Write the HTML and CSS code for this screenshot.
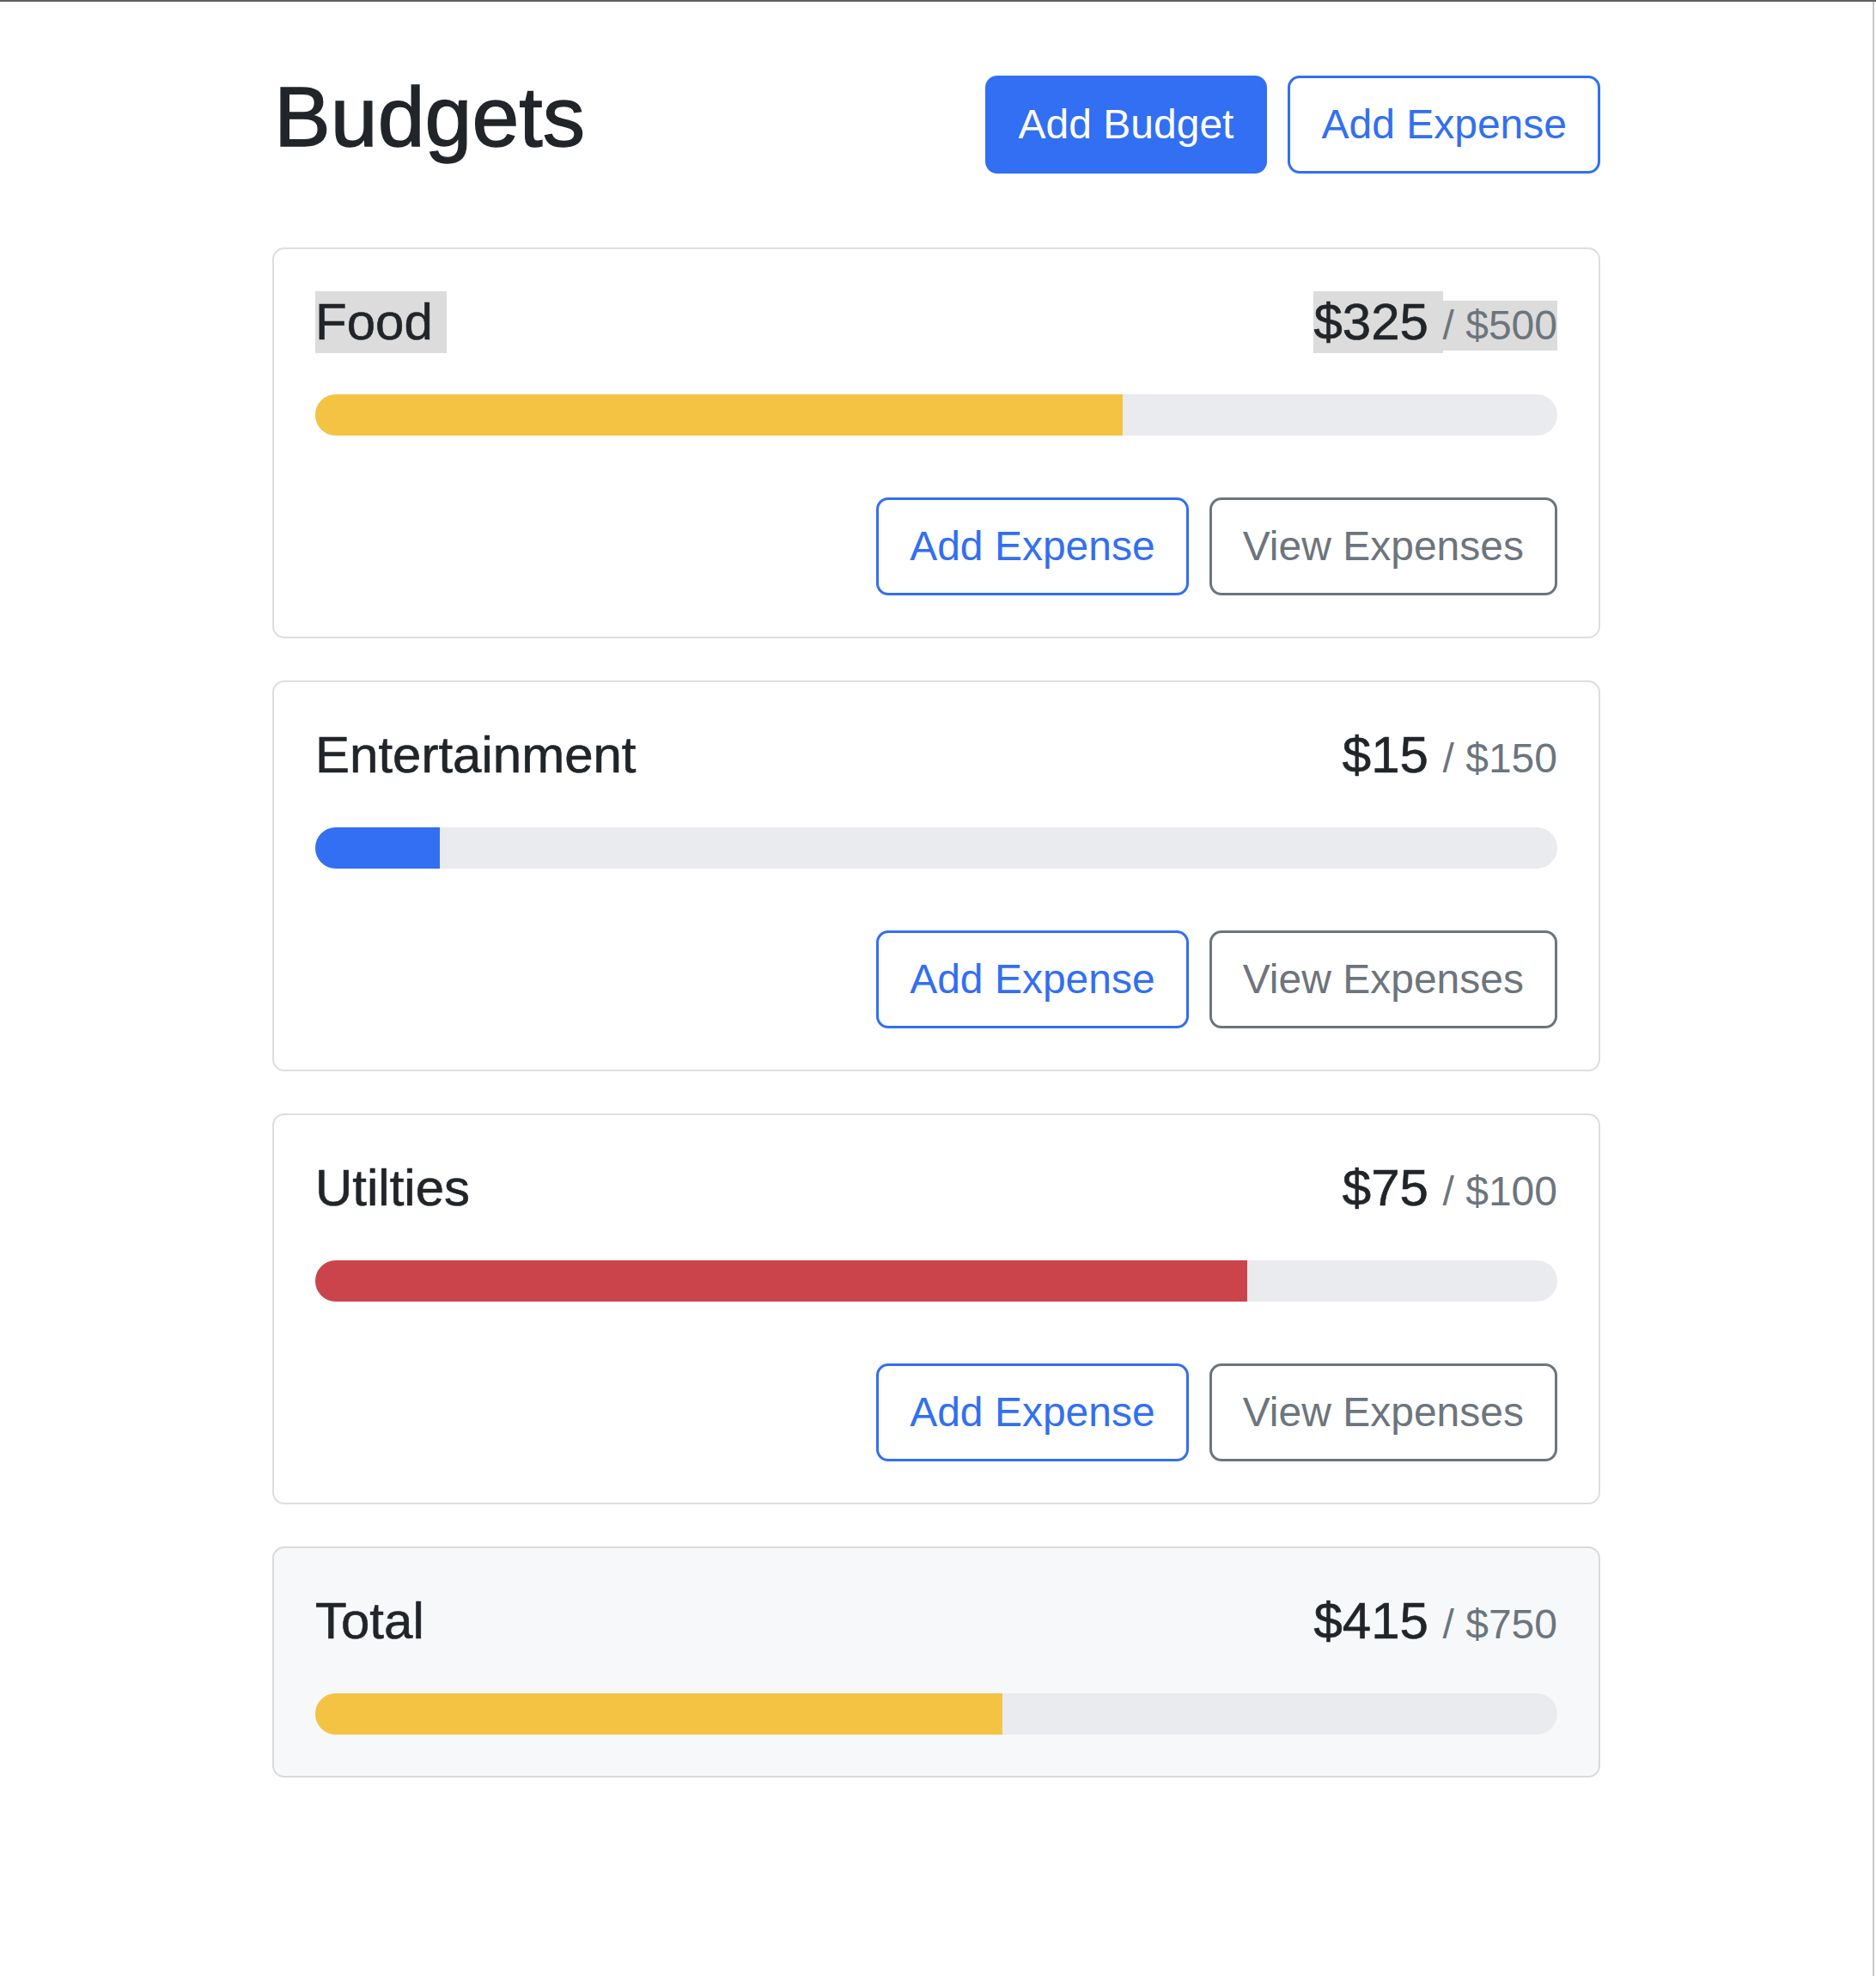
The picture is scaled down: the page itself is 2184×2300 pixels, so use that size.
FILE: index.html
```html
<!DOCTYPE html>
<html lang="en">
<head>
<meta charset="utf-8">
<title>Budgets</title>
<link rel="stylesheet" href="styles.css">
</head>
<body>
<div class="window">
  <div class="viewport">
    <div class="container">
      <header class="page-header">
        <h1 class="page-title">Budgets</h1>
        <div class="header-actions">
          <button class="btn btn-primary">Add Budget</button>
          <button class="btn btn-outline-primary">Add Expense</button>
        </div>
      </header>

      <section class="card">
        <div class="card-head">
          <span class="card-title hl">Food </span>
          <span class="amount"><span class="spent hl">$325 </span><span class="max hl">/ $500</span></span>
        </div>
        <div class="progress"><div class="progress-bar bar-warning" style="width: 65%"></div></div>
        <div class="card-actions">
          <button class="btn btn-outline-primary">Add Expense</button>
          <button class="btn btn-outline-secondary">View Expenses</button>
        </div>
      </section>

      <section class="card">
        <div class="card-head">
          <span class="card-title">Entertainment</span>
          <span class="amount"><span class="spent">$15 </span><span class="max">/ $150</span></span>
        </div>
        <div class="progress"><div class="progress-bar bar-primary" style="width: 10%"></div></div>
        <div class="card-actions">
          <button class="btn btn-outline-primary">Add Expense</button>
          <button class="btn btn-outline-secondary">View Expenses</button>
        </div>
      </section>

      <section class="card">
        <div class="card-head">
          <span class="card-title">Utilties</span>
          <span class="amount"><span class="spent">$75 </span><span class="max">/ $100</span></span>
        </div>
        <div class="progress"><div class="progress-bar bar-danger" style="width: 75%"></div></div>
        <div class="card-actions">
          <button class="btn btn-outline-primary">Add Expense</button>
          <button class="btn btn-outline-secondary">View Expenses</button>
        </div>
      </section>

      <section class="card card-total">
        <div class="card-head">
          <span class="card-title">Total</span>
          <span class="amount"><span class="spent">$415 </span><span class="max">/ $750</span></span>
        </div>
        <div class="progress"><div class="progress-bar bar-warning" style="width: 55.33%"></div></div>
      </section>
    </div>
  </div>
</div>
</body>
</html>
```

FILE: styles.css
```css
* {
  box-sizing: border-box;
}

html, body {
  margin: 0;
  padding: 0;
  background: #ffffff;
}

body {
  font-family: "Liberation Sans", Arial, Helvetica, sans-serif;
  color: #212529;
}

.window {
  display: flex;
  border-top: 2px solid #5f5e63;
  min-height: 2300px;
}

.viewport {
  width: 2182px;
  border-right: 2px solid #c9c9cc;
  min-height: 2298px;
}

.container {
  width: 1546px;
  margin: 0 auto;
  padding-top: 75px;
}

.page-header {
  display: flex;
  justify-content: space-between;
  align-items: flex-start;
  margin-bottom: 86px;
}

.page-title {
  margin: 0;
  margin-left: 2px;
  font-size: 98.7px;
  line-height: 118px;
  font-weight: 500;
  color: #212529;
  -webkit-text-stroke: 1.4px #212529;
}

.header-actions {
  display: flex;
  gap: 24px;
  margin-top: 11px;
}

.btn {
  font-family: inherit;
  font-size: 48px;
  line-height: 72px;
  padding: 18px 36px;
  border: 3px solid transparent;
  border-radius: 14px;
  background: #ffffff;
  cursor: pointer;
  white-space: nowrap;
}

.btn-primary {
  background: #326ff2;
  border-color: #326ff2;
  color: #ffffff;
}

.btn-outline-primary {
  border-color: #326ff2;
  color: #326ff2;
}

.btn-outline-secondary {
  border-color: #6c757d;
  color: #6c757d;
}

.card {
  border: 2px solid #dedede;
  border-radius: 14px;
  padding: 49px 48px 48px 48px;
  margin-bottom: 49px;
  background: #ffffff;
}

.card-total {
  background: #f7f8fa;
  border-color: #d9dadc;
}

.card-head {
  display: flex;
  justify-content: space-between;
  align-items: baseline;
}

.card-title {
  display: inline-block;
  font-size: 60px;
  line-height: 72px;
  font-weight: 500;
  white-space: pre;
  -webkit-text-stroke: 0.6px #212529;
}

.amount {
  display: inline-flex;
  align-items: baseline;
}

.spent {
  display: inline-block;
  font-size: 60px;
  line-height: 72px;
  font-weight: 500;
  white-space: pre;
  -webkit-text-stroke: 0.6px #212529;
}

.max {
  display: inline-block;
  font-size: 48px;
  line-height: 58px;
  color: #6c757d;
  white-space: pre;
}

.hl {
  background: #dcdcdc;
}

.progress {
  margin-top: 48px;
  height: 48px;
  border-radius: 24px;
  background: #eaebee;
  overflow: hidden;
  display: flex;
}

.progress-bar {
  height: 100%;
}

.bar-warning {
  background: #f5c344;
}

.bar-primary {
  background: #326ff2;
}

.bar-danger {
  background: #cc444b;
}

.card-actions {
  display: flex;
  justify-content: flex-end;
  gap: 24px;
  margin-top: 72px;
}
```
